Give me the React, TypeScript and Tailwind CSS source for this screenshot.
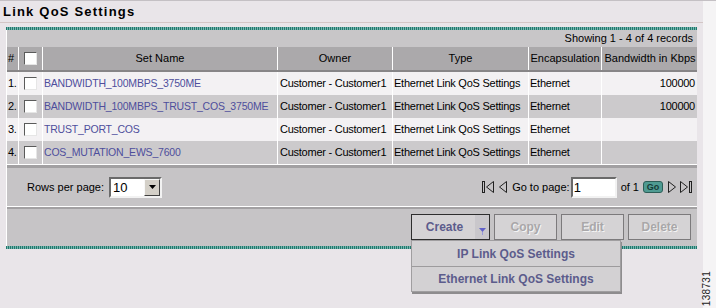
const rows = [
  { n: "1.", name: "BANDWIDTH_100MBPS_3750ME", bw: "100000" },
  { n: "2.", name: "BANDWIDTH_100MBPS_TRUST_COS_3750ME", bw: "100000" },
  { n: "3.", name: "TRUST_PORT_COS", bw: "" },
  { n: "4.", name: "COS_MUTATION_EWS_7600", bw: "" },
];

const cols = "grid grid-cols-[11px_24px_235px_115px_136px_73px_97px]";

function Checkbox() {
  return (
    <span className="block w-[13px] h-[13px] bg-white border border-t-[#5a5a5a] border-l-[#5a5a5a] border-b-[#e6e6e6] border-r-[#e6e6e6]" />
  );
}

function Teal() {
  return (
    <div className="h-[3px] bg-[repeating-linear-gradient(90deg,#23786e_0px,#23786e_1px,#74b6ae_1px,#74b6ae_2px)]" />
  );
}

function FirstIcon() {
  return (
    <svg width="13" height="12" viewBox="0 0 13 12">
      <rect x="0.5" y="0.5" width="2" height="11" fill="none" stroke="#202020" />
      <path d="M11.5 0.5 L4.5 6 L11.5 11.5 Z" fill="none" stroke="#202020" />
    </svg>
  );
}

function PrevIcon() {
  return (
    <svg width="8" height="12" viewBox="0 0 8 12">
      <path d="M7.5 0.5 L0.5 6 L7.5 11.5 Z" fill="none" stroke="#202020" />
    </svg>
  );
}

function NextIcon() {
  return (
    <svg width="8" height="12" viewBox="0 0 8 12">
      <path d="M0.5 0.5 L7.5 6 L0.5 11.5 Z" fill="none" stroke="#202020" />
    </svg>
  );
}

function LastIcon() {
  return (
    <svg width="13" height="12" viewBox="0 0 13 12">
      <path d="M1.5 0.5 L8.5 6 L1.5 11.5 Z" fill="none" stroke="#202020" />
      <rect x="10.5" y="0.5" width="2" height="11" fill="none" stroke="#202020" />
    </svg>
  );
}

function DisabledButton({ label }: { label: string }) {
  return (
    <div className="w-[63px] h-[26px] flex items-center justify-center bg-[#d5d3d5] border border-[#7c7a7c] font-bold text-[12px] text-[#a9a7a9] [text-shadow:1px_1px_0_#f4f4f4]">
      {label}
    </div>
  );
}

export default function App() {
  return (
    <div className="flex w-[716px] h-[308px] bg-[#e9e5e9] border-t border-[#c4c0c4] font-['Liberation_Sans',Arial,sans-serif] text-[11px] text-black">
      <div className="w-[703px] flex flex-col">
        {/* title */}
        <div className="h-[22px] border-b border-[#d3c6c6] pl-[3px] pt-[3px] font-bold text-[13px] leading-[15px] tracking-[1.2px]">
          Link QoS Settings
        </div>

        <div className="mt-[4px] ml-[6px] w-[691px] flex flex-col">
          <Teal />
          <div className="border-l border-white flex flex-col">
            <div className="h-[17px] bg-[#c8c6c8] flex items-center justify-end pr-[4px]">
              Showing 1 - 4 of 4 records
            </div>

            {/* header */}
            <div className={`${cols} h-[25px] bg-[#aba9ab] border-b-2 border-[#878587]`}>
              <div className="flex items-center pl-[1px]">#</div>
              <div className="flex items-center justify-center border-l border-white">
                <Checkbox />
              </div>
              <div className="flex items-center justify-center border-l border-white">Set Name</div>
              <div className="flex items-center justify-center border-l border-white">Owner</div>
              <div className="flex items-center justify-center border-l border-white">Type</div>
              <div className="flex items-center justify-center border-l border-white">Encapsulation</div>
              <div className="flex items-center justify-center border-l border-white">Bandwidth in Kbps</div>
            </div>

            {/* rows */}
            {rows.map((r, i) => (
              <div
                key={r.n}
                className={`${cols} h-[23px] tracking-[-0.25px] ${i % 2 === 0 ? "bg-[#f3f1f3]" : "bg-[#cccacc]"}`}
              >
                <div className="flex items-center pl-[1px]">{r.n}</div>
                <div className="flex items-center justify-center border-l border-white">
                  <Checkbox />
                </div>
                <div className="flex items-center pl-[1px] border-l border-white text-[#4e4e9c] text-[10.5px] tracking-[-0.2px] whitespace-nowrap">
                  {r.name}
                </div>
                <div className="flex items-center pl-[2px] border-l border-white whitespace-nowrap">Customer - Customer1</div>
                <div className="flex items-center pl-[1px] border-l border-white whitespace-nowrap">Ethernet Link QoS Settings</div>
                <div className="flex items-center pl-[1px] border-l border-white">Ethernet</div>
                <div className="flex items-center justify-end pr-[3px] border-l border-white">{r.bw}</div>
              </div>
            ))}

            <div className="h-[4px] border-t border-white bg-[#a2a0a2]" />

            {/* paging */}
            <div className="h-[38px] bg-[#c6c4c6] flex items-center pl-[20px] pr-[5px]">
              <span className="mr-[5px]">Rows per page:</span>
              <div className="w-[53px] h-[21px] flex bg-white border-2 border-t-[#6a6a6a] border-l-[#6a6a6a] border-b-[#f2f2f2] border-r-[#f2f2f2]">
                <span className="flex-1 pl-[2px] text-[13px] leading-[17px]">10</span>
                <span className="w-[16px] h-[17px] flex items-center justify-center bg-[#d4d0c8] border border-t-[#f8f8f8] border-l-[#f8f8f8] border-b-[#404040] border-r-[#404040]">
                  <svg width="7" height="4" viewBox="0 0 7 4">
                    <path d="M0 0 L7 0 L3.5 4 Z" fill="#000" />
                  </svg>
                </span>
              </div>

              <div className="ml-auto flex items-center">
                <FirstIcon />
                <span className="ml-[4px]">
                  <PrevIcon />
                </span>
                <span className="ml-[5px]">Go to page:</span>
                <div className="ml-[1px] w-[46px] h-[21px] bg-white border-2 border-t-[#6a6a6a] border-l-[#6a6a6a] border-b-[#f2f2f2] border-r-[#f2f2f2] pl-[1px] text-[13px] leading-[17px]">
                  1
                </div>
                <span className="ml-[4px]">of 1</span>
                <span className="ml-[4px] w-[20px] h-[12px] rounded-[3px] bg-[#4f9b92] border border-[#2d5e58] flex items-center justify-center text-[9px] font-bold text-[#163c37] leading-none">
                  Go
                </span>
                <span className="ml-[5px]">
                  <NextIcon />
                </span>
                <span className="ml-[3px]">
                  <LastIcon />
                </span>
              </div>
            </div>

            <div className="h-[3px] border-t border-white bg-[#a2a0a2]" />

            {/* buttons */}
            <div className="h-[37px] bg-[#c6c4c6] flex justify-end items-start pt-[5px] pr-[6px] gap-[4px]">
              <div className="relative">
                <div className="w-[79px] h-[26px] flex bg-[#d5d3d5] border border-[#2e2e2e]">
                  <span className="flex-1 flex items-center justify-center pl-[2px] font-bold text-[12px] text-[#5c5c8c]">
                    Create
                  </span>
                  <span className="w-[14px] flex items-end justify-center pb-[4px] bg-[#c9c7cb]">
                    <svg width="7" height="9" viewBox="0 0 7 9">
                      <path d="M0 2 L7 2 L3.5 6 Z" fill="#6060c8" />
                      <rect x="3" y="6" width="1" height="3" fill="#9a9ad8" />
                    </svg>
                  </span>
                </div>
                {/* menu */}
                <div className="absolute left-0 top-[26px] w-[210px] bg-[#d3d1d3] border border-[#a09ea0] shadow-[1px_2px_0_#8e8c8e] z-10 flex flex-col font-bold text-[12px] text-[#5c5c8c]">
                  <div className="h-[26px] flex items-center justify-center border-b border-[#9d9b9d]">
                    IP Link QoS Settings
                  </div>
                  <div className="h-[24px] flex items-center justify-center">
                    Ethernet Link QoS Settings
                  </div>
                </div>
              </div>
              <DisabledButton label="Copy" />
              <DisabledButton label="Edit" />
              <DisabledButton label="Delete" />
            </div>
          </div>
          <Teal />
        </div>
      </div>

      <div className="w-[13px] bg-[#f5f4f5] flex flex-col justify-end items-start pb-[2px]">
        <span className="[writing-mode:vertical-rl] rotate-180 text-[10px] leading-[8px] tracking-[0.3px] text-[#222]">
          138731
        </span>
      </div>
    </div>
  );
}
